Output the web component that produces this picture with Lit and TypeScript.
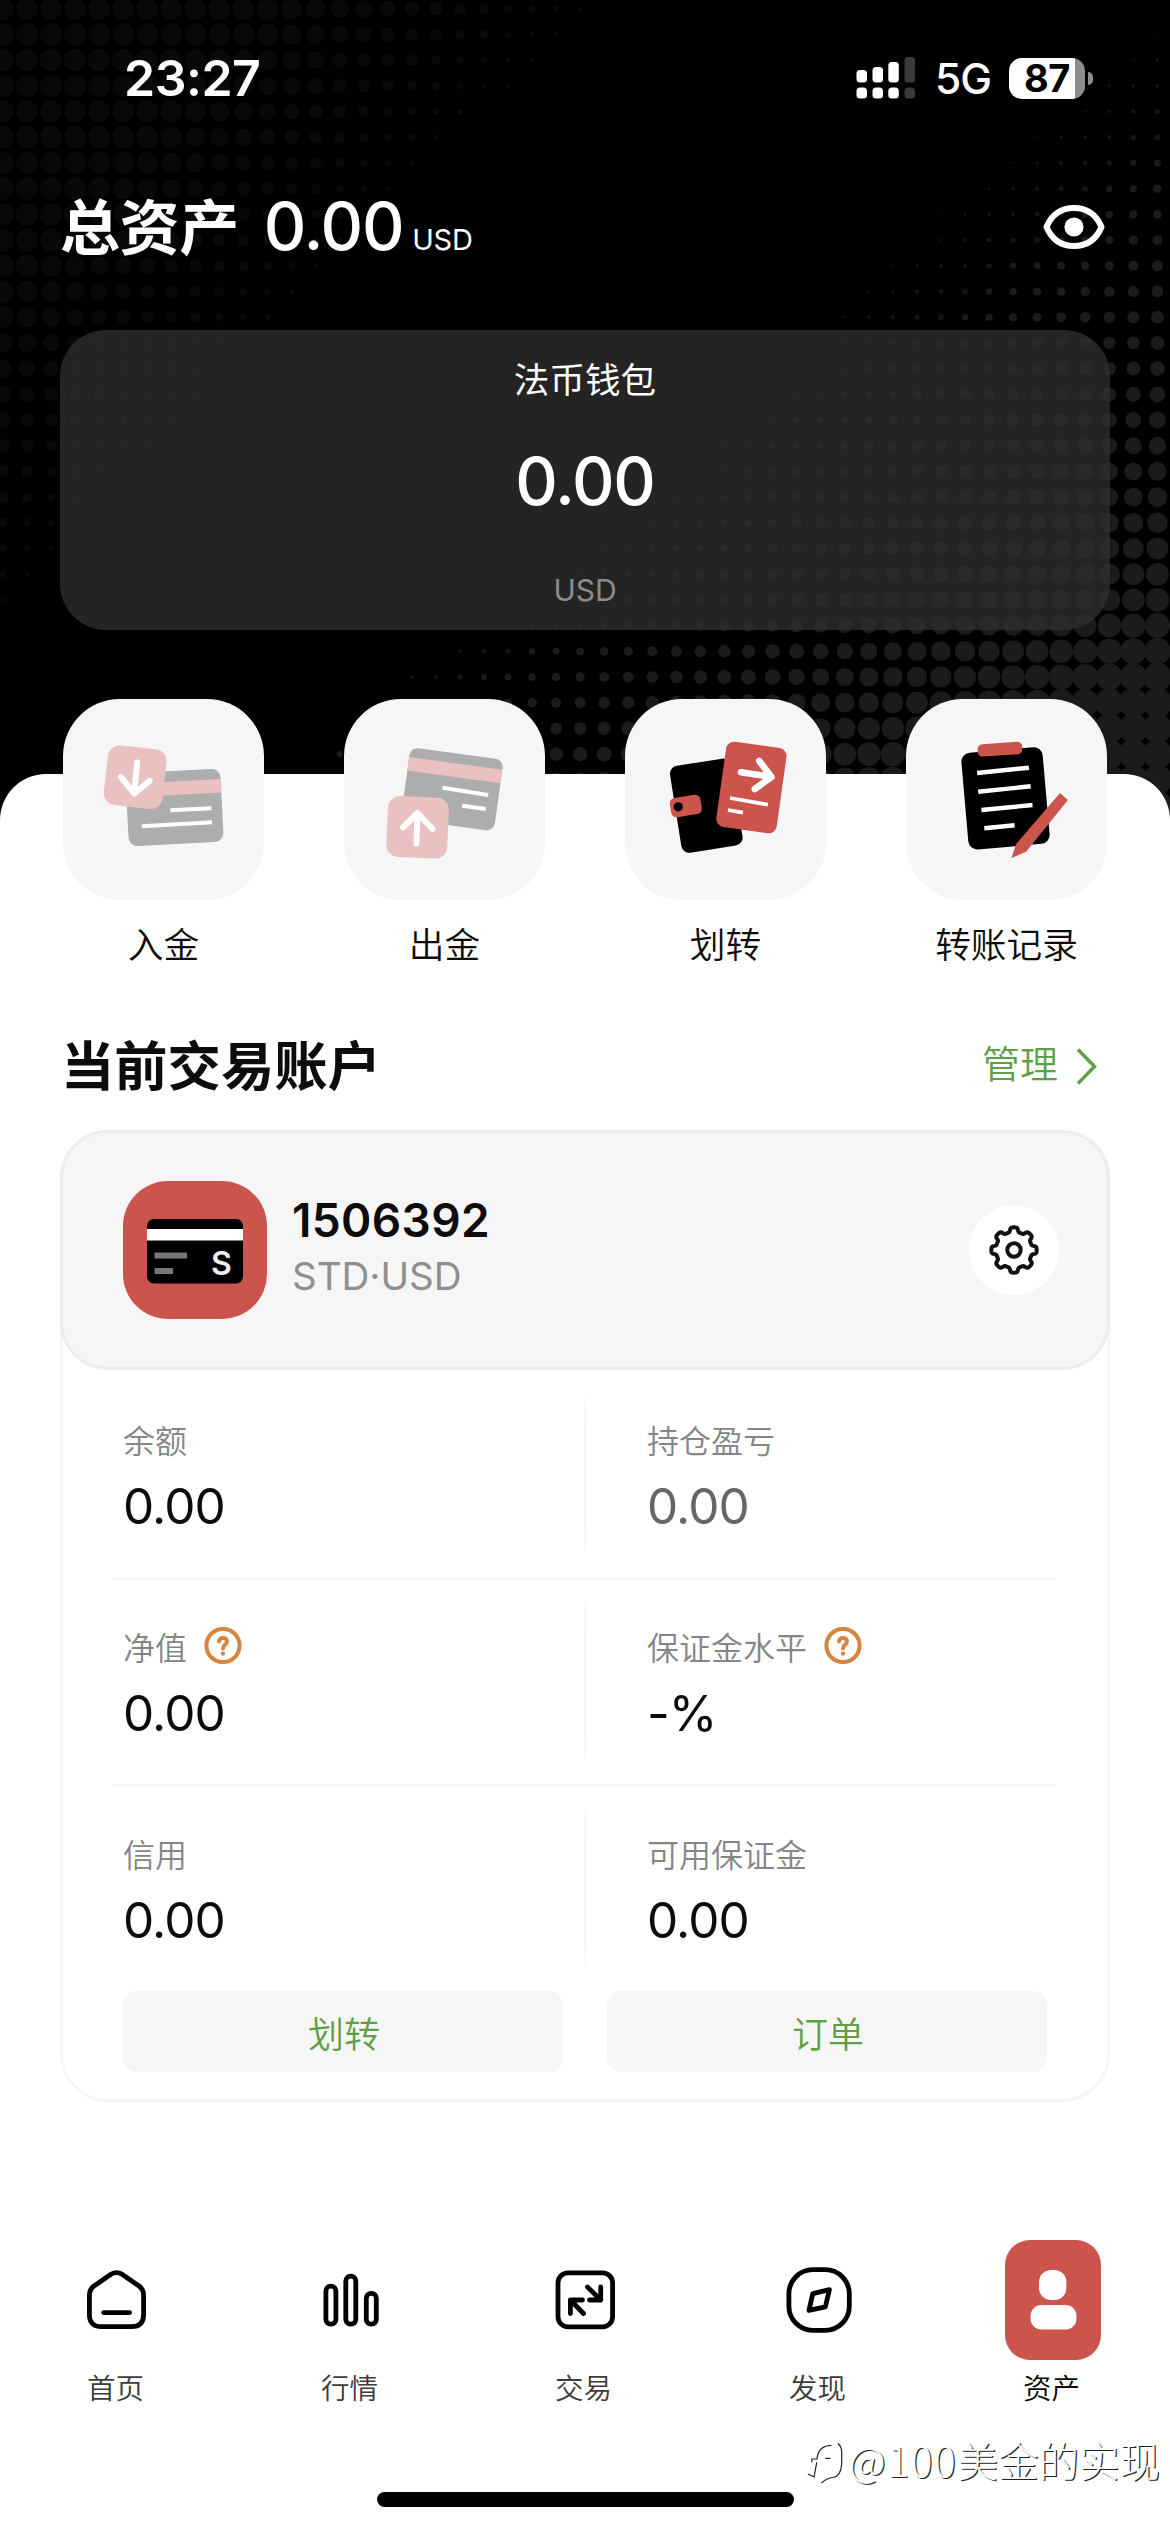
import { LitElement, html, svg, css } from "lit";
import { customElement } from "lit/decorators.js";

const gearPath = (): string => {
  const pts: string[] = [];
  for (let i = 0; i < 240; i++) {
    const a = (i / 240) * Math.PI * 2;
    const r = 20.4 + 2.3 * Math.tanh(2.4 * Math.cos(8 * a));
    pts.push(`${(25 + r * Math.sin(a)).toFixed(2)} ${(25 - r * Math.cos(a)).toFixed(2)}`);
  }
  return "M" + pts.join("L") + "Z";
};

const halftone = () => {
  const dots = [];
  for (let row = -5; row < 28; row++) {
    const y = 137.3 + row * 25.7;
    for (let col = 0; col < 49; col++) {
      const x = 1157.4 - col * 24.05;
      const d = x - 1037 + (y - 137) * 1.152;
      if (d > -8) {
        const r = Math.min(1 + d * 0.0165 + Math.max(0, y - 600) * 0.012, 14.8);
        dots.push(svg`<circle cx=${x} cy=${y} r=${r} fill=${r < 3 ? "#151515" : "#1b1b1b"}></circle>`);
      }
      const e = 590 - x - y * 0.95;
      if (e > 0) {
        dots.push(svg`<circle cx=${x} cy=${y} r=${Math.min(2 + e * 0.03, 11)} fill="#090909"></circle>`);
      }
    }
  }
  return dots;
};

const actions = [
  {
    label: "入金",
    art: svg`
      <g transform="translate(111.5 108.5) rotate(-3)">
        <rect x="-47.5" y="-36.5" width="95" height="73" rx="9" fill="#adadad"></rect>
        <rect x="-47.5" y="-26" width="95" height="13.5" fill="#e9c1c1"></rect>
      </g>
      <path d="M107.4 111.3L148.4 109.3M78.8 127.3L149 123.3" stroke="#fff" stroke-width="4"></path>
      <rect x="-29.5" y="-30" width="59" height="60" rx="12" fill="#e9c1c1" transform="translate(72.2 78.2) rotate(6.5)"></rect>
      <path d="M74.1 63.5L71.3 94M57.9 78L71.3 94.5L86.6 82" class="w" stroke-width="6"></path>`,
  },
  {
    label: "出金",
    art: svg`
      <g transform="translate(108.2 90.2) rotate(7.8)">
        <rect x="-47" y="-36" width="94" height="72" rx="8" fill="#adadad"></rect>
        <rect x="-47" y="-26" width="94" height="13.5" fill="#e9c1c1"></rect>
      </g>
      <path d="M98.5 88.7L144.2 96M118.1 106.7L141.7 110" stroke="#fff" stroke-width="4"></path>
      <rect x="-30.5" y="-30.5" width="61" height="61" rx="12" fill="#e9c1c1" transform="translate(73.6 128.3) rotate(2.5)"></rect>
      <path d="M72.4 144.5L73.5 114.5M59 128.3L73.5 114L88.5 130" class="w" stroke-width="6"></path>`,
  },
  {
    label: "划转",
    art: svg`
      <rect x="-31" y="-44" width="62" height="88" rx="8" transform="translate(81.3 106.7) rotate(-9)"></rect>
      <rect x="-15.5" y="-9.8" width="31" height="19.6" rx="5.5" fill="#cb544c" transform="translate(60.8 107) rotate(-9)"></rect>
      <circle cx="53.2" cy="107.8" r="4.6"></circle>
      <rect x="-30.5" y="-43" width="61" height="86" rx="8" fill="#cb544c" transform="translate(126.4 88.5) rotate(8)"></rect>
      <path d="M116 73.3L146 77.8M134.3 62L146.4 78L129.8 90" class="w" stroke-width="6.6"></path>
      <path d="M105 99L142.9 105.7M102.9 111L117.9 113.7" stroke="#fff" stroke-width="3.8"></path>`,
  },
  {
    label: "转账记录",
    art: svg`
      <rect x="-40.8" y="-48.5" width="81.6" height="97" rx="9" transform="translate(99.5 99.3) rotate(-5)"></rect>
      <rect x="-22.4" y="-6.2" width="44.8" height="12.4" rx="5" fill="#cb544c" transform="translate(94 50.2) rotate(-4)"></rect>
      <path d="M71.1 74L122.9 68.7M72.2 92.7L124.7 87.3M75.4 111L126.5 106M78.3 129.3L108.6 126.3" stroke="#fff" stroke-width="4.4"></path>
      <path d="M154 94L161.9 101L120.1 152.7L105.4 159L110.1 145Z" fill="#cb544c"></path>`,
  },
];

const rows = [
  [{ k: "余额", v: "0.00" }, { k: "持仓盈亏", v: "0.00", muted: true }],
  [{ k: "净值", v: "0.00", help: true }, { k: "保证金水平", v: "-%", help: true }],
  [{ k: "信用", v: "0.00" }, { k: "可用保证金", v: "0.00" }],
] as { k: string; v: string; muted?: boolean; help?: boolean }[][];

const tabs = [
  {
    label: "首页",
    icon: html`<svg class="ln" width="60" height="60" viewBox="0 0 60 60">
      <path d="M24 4.2Q29.4 1 35 4.2L52 16Q56.6 19.5 56.6 25V44.5Q56.6 56.7 44.5 56.7H14.5Q2.4 56.7 2.4 44.5V25Q2.4 19.5 7 16ZM16.6 42.6H42.6"></path></svg>`,
  },
  {
    label: "行情",
    icon: html`<svg class="ln" width="60" height="60" viewBox="0 0 60 60">
      <rect x="4.9" y="16.2" width="10" height="38" rx="4.8"></rect>
      <rect x="24.8" y="6.2" width="10" height="48" rx="4.8"></rect>
      <rect x="45.3" y="23.4" width="10" height="30.8" rx="4.8"></rect></svg>`,
  },
  {
    label: "交易",
    icon: html`<svg class="ln" width="60" height="60" viewBox="0 0 60 60">
      <rect x="3" y="2.8" width="54.6" height="54" rx="10"></rect>
      <path d="M32.5 17L45.7 30M45.7 17V30H34.4M28.5 43.5L15.4 30M27.5 30H15.4V43.5"></path></svg>`,
  },
  {
    label: "发现",
    icon: html`<svg class="ln" width="66" height="66" viewBox="0 0 66 66">
      <rect x="2.9" y="2.7" width="60.4" height="60.6" rx="24"></rect>
      <path d="M26.8 26.6L43.4 22.6L39.4 39.8L23 43.4Z"></path></svg>`,
  },
  {
    label: "资产",
    active: true,
    icon: html`<svg width="96" height="120" viewBox="0 0 96 120">
      <rect width="96" height="120" rx="25" fill="#cb544c"></rect>
      <rect x="34" y="30" width="27.4" height="30" rx="12" fill="#fff"></rect>
      <rect x="25.5" y="65" width="46" height="24.4" rx="11" fill="#fff"></rect></svg>`,
  },
];

const helpIcon = html`<svg width="38" height="38" viewBox="0 0 38 38" fill="none" stroke="#d4853f" stroke-linecap="round">
  <circle cx="19" cy="18.5" r="16.6" stroke-width="4"></circle>
  <path d="M15 14.6C15.2 9.6 23 9.8 23 14.6C23 17.8 19 17.6 19 21.4" stroke-width="4"></path>
  <circle cx="19" cy="26.6" r="2.2" fill="#d4853f" stroke="none"></circle></svg>`;

@customElement("app-root")
export class AppRoot extends LitElement {
  static styles = css`
    :host {
      display: block;
      width: 1170px;
      height: 2532px;
      overflow: hidden;
      position: relative;
      background: #fff;
      font-family: Inter, "Noto Sans CJK SC", sans-serif;
      color: #0c0c0c;
    }
    * { box-sizing: border-box; }
    svg { display: block; flex: none; }
    .w { fill: none; stroke: #fff; stroke-linecap: round; stroke-linejoin: round; }
    .ln { fill: none; stroke: #000; stroke-width: 4.8; stroke-linecap: round; stroke-linejoin: round; }
    .top { position: relative; background: #000; height: 820px; margin-bottom: -46px; color: #fff; }
    .dots { position: absolute; inset: 0; }
    .front { position: relative; }
    .status { height: 156px; display: flex; align-items: center; padding: 0 77px 0 124px; }
    .time { font-size: 50px; font-weight: 600; letter-spacing: -0.5px; flex: 1; }
    .net { font-size: 42.5px; font-weight: 500; margin: 0 17px 0 19px; letter-spacing: -1px; width: 57px; }
    .battery {
      width: 76px; height: 41px; border-radius: 13px; display: flex; align-items: center; justify-content: center;
      background: linear-gradient(90deg, #fff 66px, #8d8d8d 66px); color: #000; font-size: 38px; font-weight: 700;
      letter-spacing: -0.5px;
    }
    .nub { width: 5px; height: 13px; margin-left: 3px; border-radius: 0 5px 5px 0; background: #8d8d8d; }
    .total { display: flex; align-items: center; height: 90px; margin: 26px 65px 0 60px; }
    .sum { flex: 1; display: flex; align-items: baseline; line-height: 90px; padding-top: 11px; white-space: nowrap; }
    .sum .t { font-size: 60px; font-weight: 700; letter-spacing: -0.4px; }
    .sum .n { font-size: 66px; font-weight: 500; margin-left: 25px; letter-spacing: -1.2px; }
    .sum .u { font-size: 29px; margin-left: 9px; letter-spacing: -0.3px; }
    .wallet {
      margin: 58px 60px 0; height: 300px; border-radius: 46px; background: rgba(48, 48, 48, 0.75);
      display: flex; flex-direction: column; align-items: center; padding-top: 21px;
    }
    .wallet .a { font-size: 35.6px; line-height: 60px; }
    .wallet .b { font-size: 66px; font-weight: 500; line-height: 80px; margin-top: 30px; letter-spacing: -1.2px; }
    .wallet .c { font-size: 30px; line-height: 40px; margin-top: 49px; color: #8c8c8c; }
    .sheet { position: relative; background: #fff; border-radius: 46px 46px 0 0; height: 1758px; display: flex; flex-direction: column; }
    .actions { display: grid; grid-template-columns: repeat(4, 201px); gap: 80px; padding: 0 63px; margin-top: -75px; }
    .action { display: flex; flex-direction: column; align-items: center; white-space: nowrap; }
    .tile { width: 201px; height: 201px; border-radius: 57px; background: #f6f6f6; }
    .action span { font-size: 35.7px; font-weight: 350; line-height: 40px; margin-top: 25px; }
    .head { display: flex; align-items: center; justify-content: space-between; height: 60px; margin: 71px 72px 0 61px; }
    .head h2 { margin: 0; font-size: 53.3px; font-weight: 700; line-height: 60px; padding-top: 2px; }
    .manage { display: flex; align-items: center; gap: 18px; font-size: 38px; font-weight: 350; line-height: 54px; color: #5fa046; }
    .manage span { margin-top: -5px; }
    .card { margin: 34px 60px 0; height: 972px; border: 3px solid #f6f6f6; border-radius: 48px; }
    .acct {
      margin: -3px -3px 0; height: 240px; border: 3px solid #ededed; border-radius: 48px; background: #f6f6f6;
      display: flex; align-items: center; padding: 0 48px 0 60px;
    }
    .badge { width: 144px; height: 138px; border-radius: 45px; background: #cb544c; }
    .id { flex: 1; margin: -4px 0 0 25px; display: flex; flex-direction: column; }
    .id b { font-size: 46px; font-weight: 600; line-height: 56px; letter-spacing: 0.35px; }
    .id span { font-size: 38.5px; line-height: 56px; color: #8f8f8f; }
    .gear { width: 90px; height: 90px; border-radius: 50%; background: #fff; display: flex; align-items: center; justify-content: center; }
    .stats { margin: 3px 51px 0 49px; }
    .row { display: grid; grid-template-columns: 472px 2px 470px; height: 207px; border-bottom: 3px solid #f5f5f5; }
    .row:last-child { border-bottom: 0; height: 204px; }
    .sep { margin-top: 24px; height: 154px; background: linear-gradient(#f9f9f9, #f4f4f4 30%, #f4f4f4 80%, #fafafa); }
    .cell { padding: 46px 0 0 11px; }
    .sep + .cell { padding-left: 61px; }
    .k { display: flex; align-items: center; gap: 17px; height: 40px; font-size: 32px; font-weight: 350; color: #858585; }
    .v { font-size: 49.5px; line-height: 60px; margin-top: 17px; letter-spacing: -0.9px; }
    .muted { color: #666; }
    .btns { display: grid; grid-template-columns: 1fr 1fr; gap: 44px; padding: 0 60px; }
    .btn { height: 81px; border-radius: 14px; background: #f6f6f6; color: #5fa046; font-size: 36px; font-weight: 350; display: flex; align-items: center; justify-content: center; padding-left: 2px; }
    .nav { display: grid; grid-template-columns: repeat(5, 1fr); margin-top: 138px; }
    .tab { display: flex; flex-direction: column; align-items: center; }
    .slot { height: 120px; display: flex; align-items: center; }
    .tab span { font-size: 28.5px; font-weight: 350; line-height: 40px; margin: 9px 3px 0 0; color: #3c3c3c; }
    .tab .on { color: #080808; }
    .bar { width: 417px; height: 15px; border-radius: 8px; background: #000; margin: 83px auto 0; }
    .mark {
      position: absolute; right: 10px; bottom: 44px; display: flex; align-items: center; gap: 3px;
      font-size: 40.5px; line-height: 50px; color: #fff; font-weight: 300; white-space: nowrap;
      font-family: "Noto Sans CJK SC", sans-serif;
      text-shadow: 1.2px 1.2px 0.4px #222;
    }
    .mark i { font-style: normal; letter-spacing: 1.7px; }
  `;

  render() {
    return html`
      <div class="top">
        <svg class="dots" width="1170" height="820" viewBox="0 0 1170 820">${halftone()}</svg>
        <div class="front">
          <div class="status">
            <span class="time">23:27</span>
            <svg width="60" height="42" viewBox="0 0 60 42" fill="#fff">
              <rect x="0.5" y="13" width="10.5" height="12.5" rx="3.5"></rect><rect x="0.5" y="30.5" width="10.5" height="11" rx="3.5"></rect>
              <rect x="16.5" y="10" width="10.5" height="15.5" rx="3.5"></rect><rect x="16.5" y="30.5" width="10.5" height="11" rx="3.5"></rect>
              <rect x="32.3" y="5" width="10.5" height="20.5" rx="3.5"></rect><rect x="32.3" y="30.5" width="10.5" height="11" rx="3.5"></rect>
              <g fill="#3a3a3a"><rect x="48.5" y="0" width="10.5" height="25.5" rx="3.5"></rect><rect x="48.5" y="30.5" width="10.5" height="11" rx="3.5"></rect></g>
            </svg>
            <span class="net">5G</span>
            <div class="battery">87</div><div class="nub"></div>
          </div>
          <div class="total">
            <div class="sum"><span class="t">总资产</span><span class="n">0.00</span><span class="u">USD</span></div>
            <svg width="62" height="46" viewBox="0 0 62 46" fill="none" stroke="#fff">
              <path d="M3.5 23C9 10 18 4 31 4S53 10 58.5 23C53 36 44 42 31 42S9 36 3.5 23Z" stroke-width="6" stroke-linejoin="round"></path>
              <circle cx="31" cy="23" r="9.6" fill="#fff" stroke="none"></circle>
            </svg>
          </div>
          <div class="wallet"><span class="a">法币钱包</span><span class="b">0.00</span><span class="c">USD</span></div>
        </div>
      </div>
      <div class="sheet">
        <div class="actions">
          ${actions.map((a) => html`<div class="action">
            <svg class="tile" viewBox="0 0 201 201">${a.art}</svg><span>${a.label}</span></div>`)}
        </div>
        <div class="head">
          <h2>当前交易账户</h2>
          <div class="manage"><span>管理</span>
            <svg width="22" height="38" viewBox="0 0 22 38" fill="none" stroke="#5fa046" stroke-width="3.4"><path d="M2 2.5L18.5 19.5L2 36.5"></path></svg>
          </div>
        </div>
        <div class="card">
          <div class="acct">
            <svg class="badge" viewBox="0 0 144 138">
              <rect x="24" y="38" width="96" height="64.5" rx="7"></rect>
              <rect x="24" y="48" width="96" height="11.5" fill="#fff"></rect>
              <path d="M31.5 74.5H64M31.5 90H50" stroke="#777" stroke-width="6"></path>
              <text x="98.5" y="93.6" text-anchor="middle" font-size="32" font-weight="600" fill="#eee" font-family="Inter">S</text>
            </svg>
            <div class="id"><b>1506392</b><span>STD·USD</span></div>
            <div class="gear">
              <svg width="50" height="50" viewBox="0 0 50 50" fill="none" stroke="#111" stroke-width="4" stroke-linejoin="round">
                <path d=${gearPath()}></path><circle cx="25" cy="25" r="6.7"></circle></svg>
            </div>
          </div>
          <div class="stats">
            ${rows.map(([l, r]) => html`<div class="row">${this.cell(l)}<div class="sep"></div>${this.cell(r)}</div>`)}
          </div>
          <div class="btns"><div class="btn">划转</div><div class="btn">订单</div></div>
        </div>
        <div class="nav">
          ${tabs.map((t) => html`<div class="tab"><div class="slot">${t.icon}</div><span class=${t.active ? "on" : ""}>${t.label}</span></div>`)}
        </div>
        <div class="bar"></div>
      </div>
      <div class="mark">
        <svg width="40" height="56" viewBox="0 -6 40 56" fill="none" stroke="#222" stroke-width="1.2" stroke-linecap="round">
          <path d="M2.3 36.3L8 39L10.7 24.7M5.7 23.7L6 21H11Q12 8 25 7.3M19.7 20.3H24M32.3 5.7Q35.7 9 35.7 14V26Q35 38 27 39.5Q21 40 15.7 44.7"></path></svg>
        <span><i>@100</i>美金的实现</span>
      </div>
    `;
  }

  private cell(c: { k: string; v: string; muted?: boolean; help?: boolean }) {
    return html`<div class="cell"><div class="k">${c.k}${c.help ? helpIcon : ""}</div><div class="v ${c.muted ? "muted" : ""}">${c.v}</div></div>`;
  }
}
